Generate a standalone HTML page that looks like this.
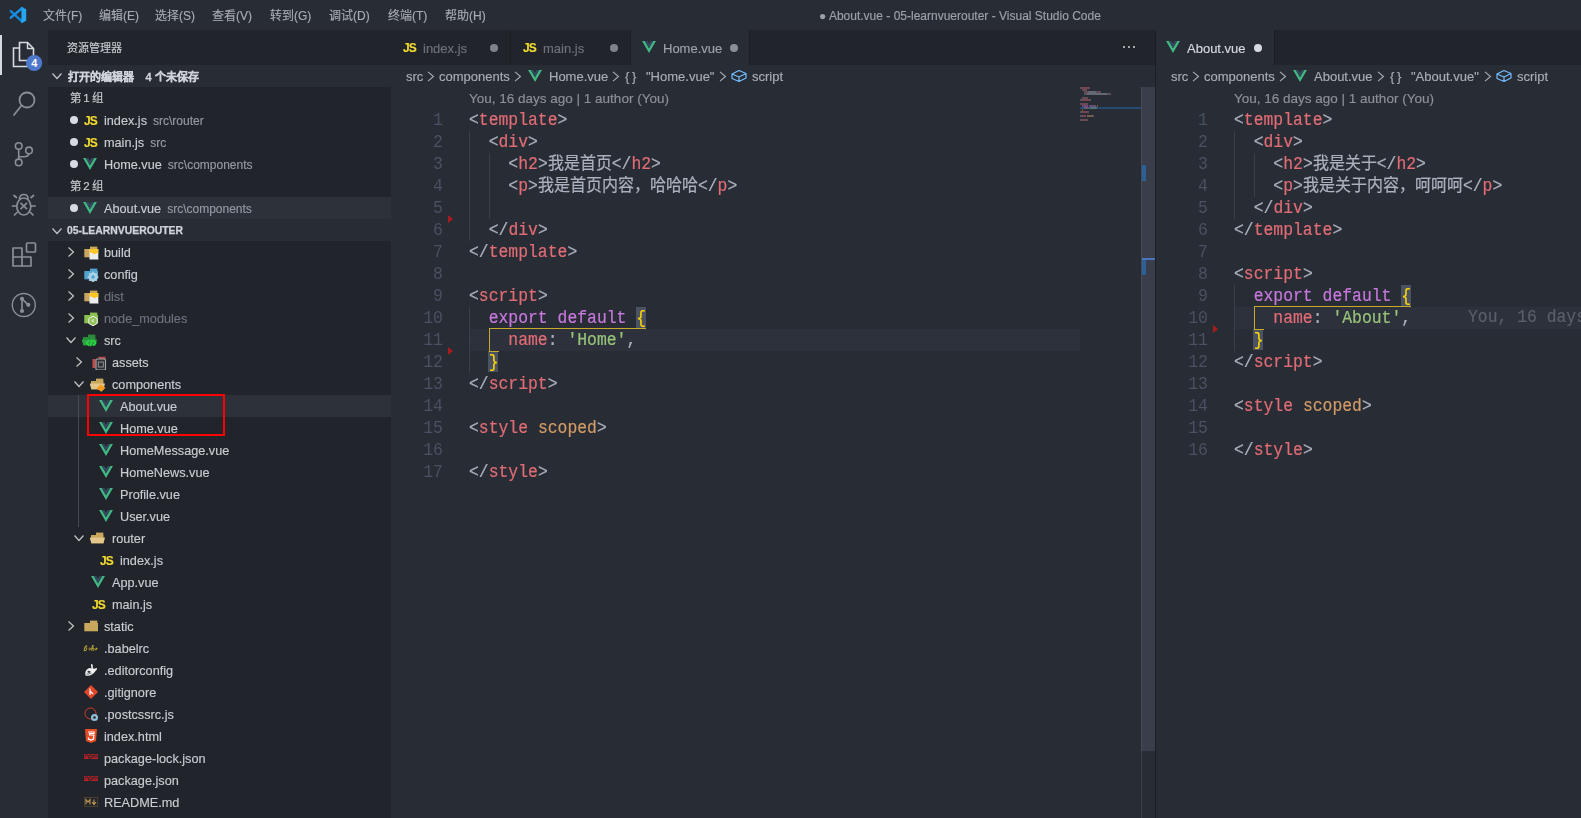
<!DOCTYPE html><html lang="zh-CN"><head><meta charset="utf-8"><style>
*{margin:0;padding:0;box-sizing:border-box}
html,body{width:1581px;height:818px;overflow:hidden;background:#282c34;font-family:"Liberation Sans",sans-serif;-webkit-font-smoothing:antialiased}
div,span,svg{position:absolute}
span{will-change:transform;-webkit-text-stroke:0.15px currentColor}
.menu{top:6px;white-space:nowrap;font-size:12px;color:#a7abb2}
.row{left:48px;width:343px;height:22px;line-height:22px;white-space:nowrap;font-size:13px;color:#c9ccd2}
.sel{background:#2c313a}
.lbl{top:0}
.desc{position:static;font-size:12px;color:#959aa2;margin-left:6px}
.dot{top:7px;width:8px;height:8px;border-radius:50%;background:#d7dae0}
.js{top:0;font-weight:bold;color:#f0d830;font-size:12px;letter-spacing:-0.9px}
.tab{top:30px;height:35px;border-right:1px solid #1b1e23;font-size:13px;line-height:35px;color:#8b9099;white-space:nowrap}
.bc{height:22px;line-height:22px;font-size:13px;color:#a9adb4;white-space:nowrap}
.bc span{position:static}
.ln{width:40px;height:22px;line-height:22px;transform:scaleY(1.1);text-align:right;font-family:"Liberation Mono",monospace;font-size:16.5px;color:#495162}
.cl{height:22px;line-height:22px;transform:scaleY(1.1);white-space:pre;font-family:"Liberation Mono",monospace;font-size:16.4px;color:#abb2bf;-webkit-text-stroke:0.2px currentColor}
.cl span{position:static;-webkit-text-stroke:0.2px currentColor}
.t{color:#e06c75}.p{color:#abb2bf}.k{color:#c678dd}.s{color:#98c379}.a{color:#d19a66}.y{color:#ffd700}
.cjk{font-size:16px}
.lens{font-size:13.5px;color:#8e9198;white-space:nowrap;height:22px;line-height:22px}
.ig{width:1px;background:#3b4048}
</style></head><body>
<div style="left:0;top:0;width:1581px;height:30px;background:#282c34"></div>
<svg style="left:0;top:0" width="32" height="30" viewBox="0 0 32 30"><path d="M10.8 11.2 L22.2 21.6" stroke="#1487d6" stroke-width="2.5" stroke-linecap="round"/><path d="M10.8 17.6 L22.2 8" stroke="#1a8ee0" stroke-width="2.5" stroke-linecap="round"/><path d="M21.4 7 L26.2 9.2 V20.8 L21.4 23.2 Z" fill="#24a6f2"/></svg>
<span class="menu" style="left:43px">文件(F)</span>
<span class="menu" style="left:99px">编辑(E)</span>
<span class="menu" style="left:155px">选择(S)</span>
<span class="menu" style="left:212px">查看(V)</span>
<span class="menu" style="left:270px">转到(G)</span>
<span class="menu" style="left:329px">调试(D)</span>
<span class="menu" style="left:388px">终端(T)</span>
<span class="menu" style="left:445px">帮助(H)</span>
<span class="menu" style="left:819px;top:9px;color:#9da1a9">● About.vue - 05-learnvuerouter - Visual Studio Code</span>
<div style="left:0;top:30px;width:48px;height:788px;background:#282c34"></div>
<div style="left:0;top:35px;width:2px;height:40px;background:#d7dae0"></div>
<svg style="left:0;top:30px" width="48" height="48" viewBox="0 0 48 48"><path d="M19.5 12.5 H27.5 L33.5 18.5 V30.5 H19.5 Z" fill="none" stroke="#d7dae0" stroke-width="1.6"/><path d="M27.5 12.5 V18.5 H33.5" fill="none" stroke="#d7dae0" stroke-width="1.4"/><path d="M19.5 18 H13.5 V36.5 H27.5 V30.5" fill="none" stroke="#d7dae0" stroke-width="1.6"/><circle cx="34.2" cy="33" r="8" fill="#4d78cc"/><text x="34.2" y="37" text-anchor="middle" font-family="Liberation Sans" font-weight="bold" font-size="11" fill="#fff">4</text></svg>
<svg style="left:0;top:78px" width="48" height="48" viewBox="0 0 48 48"><circle cx="27" cy="22" r="7.5" fill="none" stroke="#8a8e95" stroke-width="1.8"/><path d="M21.5 27.5 L13.5 37.5" stroke="#8a8e95" stroke-width="1.8"/></svg>
<svg style="left:0;top:128px" width="48" height="48" viewBox="0 0 48 48"><circle cx="18.7" cy="18" r="3.3" fill="none" stroke="#8a8e95" stroke-width="1.6"/><circle cx="18.7" cy="34.4" r="3.3" fill="none" stroke="#8a8e95" stroke-width="1.6"/><circle cx="29" cy="22.4" r="3.3" fill="none" stroke="#8a8e95" stroke-width="1.6"/><path d="M18.7 21.3 V31.1 M29 25.7 Q28 28.7 24 28.7 H18.7" fill="none" stroke="#8a8e95" stroke-width="1.6"/></svg>
<svg style="left:0;top:178px" width="48" height="48" viewBox="0 0 48 48"><ellipse cx="23.8" cy="28.5" rx="7" ry="8.5" fill="none" stroke="#8a8e95" stroke-width="1.7"/><path d="M19.5 21.5 Q19.5 16.5 23.8 16.5 Q28.1 16.5 28.1 21.5" fill="none" stroke="#8a8e95" stroke-width="1.7"/><path d="M17 20 L13.5 17 M30.6 20 L34 17 M16.8 28 H11.8 M30.8 28 H35.8 M17.5 34 L14 37.5 M30 34 L33.5 37.5 M20.5 24.8 L27 31.2 M27 24.8 L20.5 31.2" stroke="#8a8e95" stroke-width="1.7"/></svg>
<svg style="left:0;top:228px" width="48" height="48" viewBox="0 0 48 48"><path d="M13 20 H22 V38 H13 Z M13 29 H31 V38 H22" fill="none" stroke="#8a8e95" stroke-width="1.7" stroke-linejoin="round"/><rect x="26.5" y="15" width="9" height="9" rx="1" fill="none" stroke="#8a8e95" stroke-width="1.7"/></svg>
<svg style="left:0;top:278px" width="48" height="48" viewBox="0 0 48 48"><circle cx="23.8" cy="27" r="11.5" fill="none" stroke="#8a8e95" stroke-width="1.4"/><path d="M22 20.8 V33 M22 20.8 L28.3 26.8" stroke="#8a8e95" stroke-width="1.6"/><circle cx="22" cy="20.8" r="2.1" fill="#8a8e95"/><circle cx="28.3" cy="26.8" r="2.1" fill="#8a8e95"/><circle cx="22" cy="33" r="2.1" fill="#8a8e95"/></svg>
<div style="left:48px;top:30px;width:343px;height:788px;background:#21252b"></div>
<span style="left:67px;top:39px;font-size:11px;color:#c9ccd2;white-space:nowrap">资源管理器</span>
<div style="left:48px;top:65px;width:343px;height:22px;background:#282c34"></div>
<svg style="left:51px;top:71px" width="12" height="10" viewBox="0 0 12 10"><path d="M1.5 2.5 L6 7.5 L10.5 2.5" stroke="#c5c5c5" stroke-width="1.2" fill="none"/></svg>
<span style="left:68px;top:68px;font-size:11px;font-weight:bold;color:#d0d3d9;white-space:nowrap;-webkit-text-stroke:0.3px currentColor">打开的编辑器<span style="position:static;display:inline-block;width:11.5px"></span>4 个未保存</span>
<span style="left:70px;top:87px;line-height:22px;font-size:11.5px;color:#c9ccd2;white-space:nowrap">第&#8201;1&#8201;组</span>
<div class="dot" style="left:70px;top:116px"></div><span class="js" style="left:84px;top:110px;line-height:22px">JS</span><span style="left:104px;top:110px;line-height:22px;font-size:12.7px;white-space:nowrap;color:#c9ccd2">index.js<span class="desc">src\router</span></span>
<div class="dot" style="left:70px;top:138px"></div><span class="js" style="left:84px;top:132px;line-height:22px">JS</span><span style="left:104px;top:132px;line-height:22px;font-size:12.7px;white-space:nowrap;color:#c9ccd2">main.js<span class="desc">src</span></span>
<div class="dot" style="left:70px;top:160px"></div><svg style="left:83px;top:158px" width="14.0" height="12.0" viewBox="0 0 256 221"><path d="M0 0 L128 221 L256 0 H205 L128 133 L51 0 Z" fill="#41b883"/><path d="M51 0 L128 133 L205 0 H157 L128 51 L98 0 Z" fill="#35495e"/></svg><span style="left:104px;top:154px;line-height:22px;font-size:12.7px;white-space:nowrap;color:#c9ccd2">Home.vue<span class="desc">src\components</span></span>
<span style="left:70px;top:175px;line-height:22px;font-size:11.5px;color:#c9ccd2;white-space:nowrap">第&#8201;2&#8201;组</span>
<div class="row sel" style="top:197px"></div>
<div class="dot" style="left:70px;top:204px"></div><svg style="left:83px;top:202px" width="14.0" height="12.0" viewBox="0 0 256 221"><path d="M0 0 L128 221 L256 0 H205 L128 133 L51 0 Z" fill="#41b883"/><path d="M51 0 L128 133 L205 0 H157 L128 51 L98 0 Z" fill="#35495e"/></svg><span style="left:104px;top:198px;line-height:22px;font-size:12.7px;white-space:nowrap;color:#c9ccd2">About.vue<span class="desc">src\components</span></span>
<div style="left:48px;top:219px;width:343px;height:22px;background:#282c34"></div>
<svg style="left:51px;top:226px" width="12" height="10" viewBox="0 0 12 10"><path d="M1.5 2.5 L6 7.5 L10.5 2.5" stroke="#c5c5c5" stroke-width="1.2" fill="none"/></svg>
<span style="left:67px;top:225px;font-size:10.4px;font-weight:bold;color:#d0d3d9;white-space:nowrap;-webkit-text-stroke:0.25px currentColor">05-LEARNVUEROUTER</span>
<svg style="left:66px;top:246px" width="10" height="12" viewBox="0 0 10 12"><path d="M2.5 1.5 L7.5 6 L2.5 10.5" stroke="#c5c5c5" stroke-width="1.2" fill="none"/></svg><svg style="left:84px;top:244px" width="18" height="16" viewBox="0 0 18 16"><path d="M6 2.6 H13.3 V5 H6 Z" fill="#c9a75c"/><path d="M0.3 5 H14 V13.3 H0.3 Z" fill="#c9a75c"/><path d="M5.5 5 H14.3 V16 L13.5 15.5 H5.5 Z" fill="#ecedef"/><path d="M5.5 5 H14.3 V9.5 Q12.5 8 10.5 10.5 Q8 8 5.5 8.5 Z" fill="#fcc623"/></svg><span style="left:104px;top:242px;line-height:22px;font-size:12.7px;white-space:nowrap;color:#c9ccd2">build</span>
<svg style="left:66px;top:268px" width="10" height="12" viewBox="0 0 10 12"><path d="M2.5 1.5 L7.5 6 L2.5 10.5" stroke="#c5c5c5" stroke-width="1.2" fill="none"/></svg><svg style="left:84px;top:266px" width="18" height="16" viewBox="0 0 18 16"><path d="M6 2.6 H13.3 V5 H6 Z" fill="#4fa3d1"/><path d="M0.3 5 H14 V13.3 H0.3 Z" fill="#4fa3d1"/><circle cx="9" cy="11" r="4.6" fill="#a9d0e4"/><path d="M9 5.6 V16.4 M3.6 11 H14.4 M5.2 7.2 L12.8 14.8 M12.8 7.2 L5.2 14.8" stroke="#a9d0e4" stroke-width="1.6"/><circle cx="9" cy="11" r="1.8" fill="#4fa3d1"/></svg><span style="left:104px;top:264px;line-height:22px;font-size:12.7px;white-space:nowrap;color:#c9ccd2">config</span>
<svg style="left:66px;top:290px" width="10" height="12" viewBox="0 0 10 12"><path d="M2.5 1.5 L7.5 6 L2.5 10.5" stroke="#c5c5c5" stroke-width="1.2" fill="none"/></svg><svg style="left:84px;top:288px" width="18" height="16" viewBox="0 0 18 16"><path d="M6 2.6 H13.3 V5 H6 Z" fill="#c9a75c"/><path d="M0.3 5 H14 V13.3 H0.3 Z" fill="#c9a75c"/><path d="M5.5 5 H14.3 V16 L13.5 15.5 H5.5 Z" fill="#ecedef"/><path d="M5.5 5 H14.3 V9.5 Q12.5 8 10.5 10.5 Q8 8 5.5 8.5 Z" fill="#fcc623"/></svg><span style="left:104px;top:286px;line-height:22px;font-size:12.7px;white-space:nowrap;color:#6b717c">dist</span>
<svg style="left:66px;top:312px" width="10" height="12" viewBox="0 0 10 12"><path d="M2.5 1.5 L7.5 6 L2.5 10.5" stroke="#c5c5c5" stroke-width="1.2" fill="none"/></svg><svg style="left:84px;top:310px" width="18" height="16" viewBox="0 0 18 16"><path d="M6 2.6 H13.3 V5 H6 Z" fill="#8cc152"/><path d="M0.3 5 H14 V13.3 H0.3 Z" fill="#8cc152"/><path d="M9 6.2 L13.2 8.6 V13.4 L9 15.8 L4.8 13.4 V8.6 Z" fill="#8cc152" stroke="#f2f2f2" stroke-width="1"/><path d="M8 9.5 V12.5 M10 9.5 Q8.5 9 8.8 11 Q10.5 11 10 12.5" stroke="#f2f2f2" stroke-width="0.7" fill="none"/></svg><span style="left:104px;top:308px;line-height:22px;font-size:12.7px;white-space:nowrap;color:#6b717c">node_modules</span>
<svg style="left:65px;top:335px" width="12" height="10" viewBox="0 0 12 10"><path d="M1.5 2.5 L6 7.5 L10.5 2.5" stroke="#c5c5c5" stroke-width="1.2" fill="none"/></svg><svg style="left:82px;top:332px" width="18" height="16" viewBox="0 0 18 16"><path d="M6 2.6 H13.3 V5 H6 Z" fill="#2b8a3a"/><path d="M1 5 H13.5 V13.3 H1 Z" fill="#2b8a3a"/><path d="M-0.5 7.5 H15 L13.5 13.3 H1.5 Z" fill="#2fa044"/><path d="M7.2 8.2 L4.4 11 L7.2 13.8 M11 8.2 L13.8 11 L11 13.8 M9.8 7.6 L8.4 14.4" stroke="#20e03f" stroke-width="1.4" fill="none"/></svg><span style="left:104px;top:330px;line-height:22px;font-size:12.7px;white-space:nowrap;color:#c9ccd2">src</span>
<svg style="left:74px;top:356px" width="10" height="12" viewBox="0 0 10 12"><path d="M2.5 1.5 L7.5 6 L2.5 10.5" stroke="#c5c5c5" stroke-width="1.2" fill="none"/></svg><svg style="left:92px;top:354px" width="18" height="16" viewBox="0 0 18 16"><path d="M0.5 5 H3.5 V14 H0.5 Z" fill="#c44b4b"/><path d="M6.5 2.8 H13.5 V4.8 H6.5 Z" fill="#c44b4b"/><rect x="4" y="5" width="9.5" height="11" rx="1" fill="#2c2f35" stroke="#a8a8a8" stroke-width="1.1"/><rect x="6.3" y="8" width="5" height="5" fill="none" stroke="#9a9a9a" stroke-width="0.9"/></svg><span style="left:112px;top:352px;line-height:22px;font-size:12.7px;white-space:nowrap;color:#c9ccd2">assets</span>
<svg style="left:73px;top:379px" width="12" height="10" viewBox="0 0 12 10"><path d="M1.5 2.5 L6 7.5 L10.5 2.5" stroke="#c5c5c5" stroke-width="1.2" fill="none"/></svg><svg style="left:90px;top:376px" width="18" height="16" viewBox="0 0 18 16"><path d="M6 2.6 H13.3 V5 H6 Z" fill="#c9a75c"/><path d="M1 5 H13.5 V13.3 H1 Z" fill="#c9a75c"/><path d="M-0.5 7.5 H15 L13.5 13.3 H1.5 Z" fill="#e1c78a"/><path d="M10.5 8.5 L15.5 11.8 L11.5 15.8 L6.5 12.5 Z" fill="#f39c1f"/></svg><span style="left:112px;top:374px;line-height:22px;font-size:12.7px;white-space:nowrap;color:#c9ccd2">components</span>
<div class="row sel" style="top:395px"></div>
<svg style="left:99px;top:400px" width="14.0" height="12.0" viewBox="0 0 256 221"><path d="M0 0 L128 221 L256 0 H205 L128 133 L51 0 Z" fill="#41b883"/><path d="M51 0 L128 133 L205 0 H157 L128 51 L98 0 Z" fill="#35495e"/></svg><span style="left:120px;top:396px;line-height:22px;font-size:12.7px;white-space:nowrap;color:#c9ccd2">About.vue</span>
<svg style="left:99px;top:422px" width="14.0" height="12.0" viewBox="0 0 256 221"><path d="M0 0 L128 221 L256 0 H205 L128 133 L51 0 Z" fill="#41b883"/><path d="M51 0 L128 133 L205 0 H157 L128 51 L98 0 Z" fill="#35495e"/></svg><span style="left:120px;top:418px;line-height:22px;font-size:12.7px;white-space:nowrap;color:#c9ccd2">Home.vue</span>
<svg style="left:99px;top:444px" width="14.0" height="12.0" viewBox="0 0 256 221"><path d="M0 0 L128 221 L256 0 H205 L128 133 L51 0 Z" fill="#41b883"/><path d="M51 0 L128 133 L205 0 H157 L128 51 L98 0 Z" fill="#35495e"/></svg><span style="left:120px;top:440px;line-height:22px;font-size:12.7px;white-space:nowrap;color:#c9ccd2">HomeMessage.vue</span>
<svg style="left:99px;top:466px" width="14.0" height="12.0" viewBox="0 0 256 221"><path d="M0 0 L128 221 L256 0 H205 L128 133 L51 0 Z" fill="#41b883"/><path d="M51 0 L128 133 L205 0 H157 L128 51 L98 0 Z" fill="#35495e"/></svg><span style="left:120px;top:462px;line-height:22px;font-size:12.7px;white-space:nowrap;color:#c9ccd2">HomeNews.vue</span>
<svg style="left:99px;top:488px" width="14.0" height="12.0" viewBox="0 0 256 221"><path d="M0 0 L128 221 L256 0 H205 L128 133 L51 0 Z" fill="#41b883"/><path d="M51 0 L128 133 L205 0 H157 L128 51 L98 0 Z" fill="#35495e"/></svg><span style="left:120px;top:484px;line-height:22px;font-size:12.7px;white-space:nowrap;color:#c9ccd2">Profile.vue</span>
<svg style="left:99px;top:510px" width="14.0" height="12.0" viewBox="0 0 256 221"><path d="M0 0 L128 221 L256 0 H205 L128 133 L51 0 Z" fill="#41b883"/><path d="M51 0 L128 133 L205 0 H157 L128 51 L98 0 Z" fill="#35495e"/></svg><span style="left:120px;top:506px;line-height:22px;font-size:12.7px;white-space:nowrap;color:#c9ccd2">User.vue</span>
<div style="left:78px;top:395px;width:1px;height:132px;background:#454a52"></div>
<svg style="left:73px;top:533px" width="12" height="10" viewBox="0 0 12 10"><path d="M1.5 2.5 L6 7.5 L10.5 2.5" stroke="#c5c5c5" stroke-width="1.2" fill="none"/></svg><svg style="left:90px;top:530px" width="18" height="16" viewBox="0 0 18 16"><path d="M6 2.6 H13.3 V5 H6 Z" fill="#c9a75c"/><path d="M1 5 H13.5 V13.3 H1 Z" fill="#c9a75c"/><path d="M-0.5 7.5 H15 L13.5 13.3 H1.5 Z" fill="#e1c78a"/></svg><span style="left:112px;top:528px;line-height:22px;font-size:12.7px;white-space:nowrap;color:#c9ccd2">router</span>
<span class="js" style="left:100px;top:550px;line-height:22px">JS</span><span style="left:120px;top:550px;line-height:22px;font-size:12.7px;white-space:nowrap;color:#c9ccd2">index.js</span>
<svg style="left:91px;top:576px" width="14.0" height="12.0" viewBox="0 0 256 221"><path d="M0 0 L128 221 L256 0 H205 L128 133 L51 0 Z" fill="#41b883"/><path d="M51 0 L128 133 L205 0 H157 L128 51 L98 0 Z" fill="#35495e"/></svg><span style="left:112px;top:572px;line-height:22px;font-size:12.7px;white-space:nowrap;color:#c9ccd2">App.vue</span>
<span class="js" style="left:92px;top:594px;line-height:22px">JS</span><span style="left:112px;top:594px;line-height:22px;font-size:12.7px;white-space:nowrap;color:#c9ccd2">main.js</span>
<svg style="left:66px;top:620px" width="10" height="12" viewBox="0 0 10 12"><path d="M2.5 1.5 L7.5 6 L2.5 10.5" stroke="#c5c5c5" stroke-width="1.2" fill="none"/></svg><svg style="left:84px;top:618px" width="18" height="16" viewBox="0 0 18 16"><path d="M6 2.6 H13.3 V5 H6 Z" fill="#c9a75c"/><path d="M0.3 5 H14 V13.3 H0.3 Z" fill="#c9a75c"/></svg><span style="left:104px;top:616px;line-height:22px;font-size:12.7px;white-space:nowrap;color:#c9ccd2">static</span>
<span style="left:104px;top:638px;line-height:22px;font-size:12.7px;white-space:nowrap;color:#c9ccd2">.babelrc</span>
<span style="left:104px;top:660px;line-height:22px;font-size:12.7px;white-space:nowrap;color:#c9ccd2">.editorconfig</span>
<span style="left:104px;top:682px;line-height:22px;font-size:12.7px;white-space:nowrap;color:#c9ccd2">.gitignore</span>
<span style="left:104px;top:704px;line-height:22px;font-size:12.7px;white-space:nowrap;color:#c9ccd2">.postcssrc.js</span>
<span style="left:104px;top:726px;line-height:22px;font-size:12.7px;white-space:nowrap;color:#c9ccd2">index.html</span>
<span style="left:104px;top:748px;line-height:22px;font-size:12.7px;white-space:nowrap;color:#c9ccd2">package-lock.json</span>
<span style="left:104px;top:770px;line-height:22px;font-size:12.7px;white-space:nowrap;color:#c9ccd2">package.json</span>
<span style="left:104px;top:792px;line-height:22px;font-size:12.7px;white-space:nowrap;color:#c9ccd2">README.md</span>
<svg style="left:83px;top:644px" width="15" height="8" viewBox="0 0 15 8"><path d="M1 6.5 Q2 1 3.5 1.5 Q4.5 2.5 2.5 4 Q5 4.5 3 6.5 Q2 7 1 6.5 M5.5 5 Q6.5 3.5 7.5 4.5 Q7 6.5 6 6 M8.5 6.5 Q9 2 10 1 Q10 4 9.5 5 Q11 3.5 11.5 5 Q11 7 9.5 6.3 M12.5 5.5 Q13 3.5 14 4 Q14.5 5.5 12.5 6" stroke="#cbb237" stroke-width="0.9" fill="none"/></svg>
<svg style="left:84px;top:663px" width="14" height="14" viewBox="0 0 14 14"><path d="M1.5 12.5 Q0.5 8 3.5 6 Q5.5 4.5 7.5 5.5 L7 2.5 Q6.5 0.8 8 1 Q9 1.5 8.8 4 Q8.5 5.5 10 5.8 L13 5 Q13.5 6.5 11.5 8 Q10 10 8 11.5 Q5 13.5 1.5 12.5 Z" fill="#f0f0f0"/><ellipse cx="5" cy="8.8" rx="1.6" ry="1.1" fill="#3a3d44"/><path d="M2.5 11 Q5 11.5 7.5 10" stroke="#3a3d44" stroke-width="0.7" fill="none"/></svg>
<svg style="left:84px;top:685px" width="14" height="14" viewBox="0 0 14 14"><path d="M7 0 L14 7 L7 14 L0 7 Z" fill="#e0472b"/><path d="M6 3.5 L6 10 M6 6 L9 9" stroke="#fff" stroke-width="1.1"/></svg>
<svg style="left:84px;top:707px" width="15" height="15" viewBox="0 0 15 15"><circle cx="6.5" cy="6.5" r="5.5" fill="none" stroke="#d33c2c" stroke-width="1"/><circle cx="10.5" cy="10.5" r="3.5" fill="#8fc1dc"/><circle cx="10.5" cy="10.5" r="1.3" fill="#21252b"/></svg>
<svg style="left:85px;top:729px" width="12" height="14" viewBox="0 0 12 14"><path d="M0 0 H12 L11 12 L6 14 L1 12 Z" fill="#e44d26"/><path d="M3 3 H9 V4.5 H4.5 V6 H8.8 L8.5 10 L6 11 L3.5 10 V8.5" fill="none" stroke="#fff" stroke-width="1.2"/></svg>
<svg style="left:84px;top:754px" width="14" height="7" viewBox="0 0 14 7"><rect x="0" y="0" width="14" height="5" fill="#c12127"/><path d="M1 1 V4 M1 1 H4 V4 M5 1 V6 M5 1 H8 V4 H5 M9 1 V4 M9 1 H13 V4 M11 1 V4" stroke="#21252b" stroke-width="0.8" fill="none"/></svg>
<svg style="left:84px;top:776px" width="14" height="7" viewBox="0 0 14 7"><rect x="0" y="0" width="14" height="5" fill="#c12127"/><path d="M1 1 V4 M1 1 H4 V4 M5 1 V6 M5 1 H8 V4 H5 M9 1 V4 M9 1 H13 V4 M11 1 V4" stroke="#21252b" stroke-width="0.8" fill="none"/></svg>
<svg style="left:84px;top:797px" width="14" height="10" viewBox="0 0 14 10"><rect x="0.5" y="0.5" width="13" height="9" fill="none" stroke="#4a3f2f"/><path d="M2 7.5 V2.5 L4 5 L6 2.5 V7.5 M10 2.5 V7 M8 5 L10 7.5 L12 5" stroke="#c29a5a" stroke-width="1.1" fill="none"/></svg>
<div style="left:87px;top:394px;width:138px;height:42px;border:2px solid #f00"></div>
<div style="left:391px;top:30px;width:764px;height:35px;background:#21252b"></div>
<div class="tab" style="left:391px;width:120px"></div>
<span class="js" style="left:403px;top:31px;line-height:35px">JS</span>
<span style="left:423px;top:31px;line-height:35px;font-size:13px;color:#6c717a;white-space:nowrap">index.js</span>
<div class="dot" style="left:490px;top:44px;background:#7e838b"></div>
<div class="tab" style="left:511px;width:120px"></div>
<span class="js" style="left:523px;top:31px;line-height:35px">JS</span>
<span style="left:543px;top:31px;line-height:35px;font-size:13px;color:#6c717a;white-space:nowrap">main.js</span>
<div class="dot" style="left:610px;top:44px;background:#7e838b"></div>
<div class="tab" style="left:631px;width:119px;background:#282c34"></div>
<svg style="left:642px;top:41px" width="14.0" height="12.0" viewBox="0 0 256 221"><path d="M0 0 L128 221 L256 0 H205 L128 133 L51 0 Z" fill="#41b883"/><path d="M51 0 L128 133 L205 0 H157 L128 51 L98 0 Z" fill="#35495e"/></svg>
<span style="left:663px;top:31px;line-height:35px;font-size:13px;color:#9ea2a9">Home.vue</span>
<div class="dot" style="left:730px;top:44px;background:#8a8e95"></div>
<div style="left:1123px;top:46px;width:2.2px;height:2.2px;background:#d4d4d4;border-radius:50%"></div>
<div style="left:1128px;top:46px;width:2.2px;height:2.2px;background:#d4d4d4;border-radius:50%"></div>
<div style="left:1133px;top:46px;width:2.2px;height:2.2px;background:#d4d4d4;border-radius:50%"></div>
<span style="left:406px;top:66px;line-height:22px;font-size:13px;color:#a9adb4;white-space:nowrap">src</span>
<svg style="left:427px;top:71px" width="8" height="11" viewBox="0 0 8 11"><path d="M1 0.8 L6.5 5.5 L1 10.2" stroke="#a9adb4" stroke-width="1.1" fill="none"/></svg>
<span style="left:439px;top:66px;line-height:22px;font-size:13px;color:#a9adb4;white-space:nowrap">components</span>
<svg style="left:514px;top:71px" width="8" height="11" viewBox="0 0 8 11"><path d="M1 0.8 L6.5 5.5 L1 10.2" stroke="#a9adb4" stroke-width="1.1" fill="none"/></svg>
<svg style="left:528px;top:70px" width="14.0" height="12.0" viewBox="0 0 256 221"><path d="M0 0 L128 221 L256 0 H205 L128 133 L51 0 Z" fill="#41b883"/><path d="M51 0 L128 133 L205 0 H157 L128 51 L98 0 Z" fill="#35495e"/></svg>
<span style="left:549px;top:66px;line-height:22px;font-size:13px;color:#a9adb4;white-space:nowrap">Home.vue</span>
<svg style="left:612px;top:71px" width="8" height="11" viewBox="0 0 8 11"><path d="M1 0.8 L6.5 5.5 L1 10.2" stroke="#a9adb4" stroke-width="1.1" fill="none"/></svg>
<span style="left:625px;top:66px;line-height:22px;font-size:13px;color:#a9adb4;white-space:nowrap">{&#8201;}</span>
<span style="left:646px;top:66px;line-height:22px;font-size:13px;color:#a9adb4;white-space:nowrap">"Home.vue"</span>
<svg style="left:719px;top:71px" width="8" height="11" viewBox="0 0 8 11"><path d="M1 0.8 L6.5 5.5 L1 10.2" stroke="#a9adb4" stroke-width="1.1" fill="none"/></svg>
<svg style="left:731px;top:69px" width="16" height="14" viewBox="0 0 16 14"><path d="M1 5 L8 1.5 L15 4.5 V9 L8 12.5 L1 9.5 Z M1 5 L8 8 L15 4.5 M8 8 V12.5" stroke="#75beff" stroke-width="1.2" fill="none" stroke-linejoin="round"/></svg>
<span style="left:752px;top:66px;line-height:22px;font-size:13px;color:#a9adb4;white-space:nowrap">script</span>
<span class="lens" style="left:469px;top:88px">You, 16 days ago | 1 author (You)</span>
<div style="left:469px;top:329px;width:611px;height:22px;background:#2c313c"></div>
<div style="left:636px;top:307px;width:10px;height:21px;background:#4b5262"></div>
<div style="left:488px;top:351px;width:10px;height:21px;background:#4b5262"></div>
<div class="ig" style="left:469px;top:131px;height:110px"></div>
<div class="ig" style="left:489px;top:153px;height:66px"></div>
<div class="ig" style="left:469px;top:307px;height:66px"></div>
<div class="ln" style="left:403px;top:110px">1</div>
<div class="cl" style="left:469px;top:110px"><span class="p">&lt;</span><span class="t">template</span><span class="p">&gt;</span></div>
<div class="ln" style="left:403px;top:132px">2</div>
<div class="cl" style="left:469px;top:132px">  <span class="p">&lt;</span><span class="t">div</span><span class="p">&gt;</span></div>
<div class="ln" style="left:403px;top:154px">3</div>
<div class="cl" style="left:469px;top:154px">    <span class="p">&lt;</span><span class="t">h2</span><span class="p">&gt;</span><span class="cjk">我是首页</span><span class="p">&lt;/</span><span class="t">h2</span><span class="p">&gt;</span></div>
<div class="ln" style="left:403px;top:176px">4</div>
<div class="cl" style="left:469px;top:176px">    <span class="p">&lt;</span><span class="t">p</span><span class="p">&gt;</span><span class="cjk">我是首页内容，哈哈哈</span><span class="p">&lt;/</span><span class="t">p</span><span class="p">&gt;</span></div>
<div class="ln" style="left:403px;top:198px">5</div>
<div class="cl" style="left:469px;top:198px"></div>
<div class="ln" style="left:403px;top:220px">6</div>
<div class="cl" style="left:469px;top:220px">  <span class="p">&lt;/</span><span class="t">div</span><span class="p">&gt;</span></div>
<div class="ln" style="left:403px;top:242px">7</div>
<div class="cl" style="left:469px;top:242px"><span class="p">&lt;/</span><span class="t">template</span><span class="p">&gt;</span></div>
<div class="ln" style="left:403px;top:264px">8</div>
<div class="cl" style="left:469px;top:264px"></div>
<div class="ln" style="left:403px;top:286px">9</div>
<div class="cl" style="left:469px;top:286px"><span class="p">&lt;</span><span class="t">script</span><span class="p">&gt;</span></div>
<div class="ln" style="left:403px;top:308px">10</div>
<div class="cl" style="left:469px;top:308px">  <span class="k">export</span> <span class="k">default</span> <span class="y">{</span></div>
<div class="ln" style="left:403px;top:330px">11</div>
<div class="cl" style="left:469px;top:330px">    <span class="t">name</span>: <span class="s">'Home'</span>,</div>
<div class="ln" style="left:403px;top:352px">12</div>
<div class="cl" style="left:469px;top:352px">  <span class="y">}</span></div>
<div class="ln" style="left:403px;top:374px">13</div>
<div class="cl" style="left:469px;top:374px"><span class="p">&lt;/</span><span class="t">script</span><span class="p">&gt;</span></div>
<div class="ln" style="left:403px;top:396px">14</div>
<div class="cl" style="left:469px;top:396px"></div>
<div class="ln" style="left:403px;top:418px">15</div>
<div class="cl" style="left:469px;top:418px"><span class="p">&lt;</span><span class="t">style</span> <span class="a">scoped</span><span class="p">&gt;</span></div>
<div class="ln" style="left:403px;top:440px">16</div>
<div class="cl" style="left:469px;top:440px"></div>
<div class="ln" style="left:403px;top:462px">17</div>
<div class="cl" style="left:469px;top:462px"><span class="p">&lt;/</span><span class="t">style</span><span class="p">&gt;</span></div>
<svg style="left:448px;top:215px" width="5" height="8" viewBox="0 0 5 8"><path d="M0 0 L5 4 L0 8 Z" fill="#a81b1f"/></svg>
<svg style="left:448px;top:347px" width="5" height="8" viewBox="0 0 5 8"><path d="M0 0 L5 4 L0 8 Z" fill="#a81b1f"/></svg>
<div style="left:489px;top:328px;width:157px;height:1px;background:#c9a92a"></div>
<div style="left:489px;top:328px;width:1px;height:23px;background:#c9a92a"></div>
<div style="left:489px;top:351px;width:10px;height:1px;background:#c9a92a"></div>
<div style="left:1080px;top:107px;width:61px;height:2px;background:#264a70"></div>
<div style="left:1080px;top:87px;width:1px;height:2px;background:rgba(171,178,191,0.3)"></div>
<div style="left:1081px;top:87px;width:8px;height:2px;background:rgba(224,108,117,0.42)"></div>
<div style="left:1089px;top:87px;width:1px;height:2px;background:rgba(171,178,191,0.3)"></div>
<div style="left:1082px;top:89px;width:1px;height:2px;background:rgba(171,178,191,0.3)"></div>
<div style="left:1083px;top:89px;width:3px;height:2px;background:rgba(224,108,117,0.42)"></div>
<div style="left:1086px;top:89px;width:1px;height:2px;background:rgba(171,178,191,0.3)"></div>
<div style="left:1084px;top:91px;width:1px;height:2px;background:rgba(171,178,191,0.3)"></div>
<div style="left:1085px;top:91px;width:2px;height:2px;background:rgba(224,108,117,0.42)"></div>
<div style="left:1087px;top:91px;width:1px;height:2px;background:rgba(171,178,191,0.3)"></div>
<div style="left:1088px;top:91px;width:8px;height:2px;background:rgba(171,178,191,0.45)"></div>
<div style="left:1096px;top:91px;width:2px;height:2px;background:rgba(171,178,191,0.3)"></div>
<div style="left:1098px;top:91px;width:2px;height:2px;background:rgba(224,108,117,0.42)"></div>
<div style="left:1100px;top:91px;width:1px;height:2px;background:rgba(171,178,191,0.3)"></div>
<div style="left:1084px;top:93px;width:1px;height:2px;background:rgba(171,178,191,0.3)"></div>
<div style="left:1085px;top:93px;width:1px;height:2px;background:rgba(224,108,117,0.42)"></div>
<div style="left:1086px;top:93px;width:1px;height:2px;background:rgba(171,178,191,0.3)"></div>
<div style="left:1087px;top:93px;width:20px;height:2px;background:rgba(171,178,191,0.45)"></div>
<div style="left:1107px;top:93px;width:2px;height:2px;background:rgba(171,178,191,0.3)"></div>
<div style="left:1109px;top:93px;width:1px;height:2px;background:rgba(224,108,117,0.42)"></div>
<div style="left:1110px;top:93px;width:1px;height:2px;background:rgba(171,178,191,0.3)"></div>
<div style="left:1082px;top:97px;width:2px;height:2px;background:rgba(171,178,191,0.3)"></div>
<div style="left:1084px;top:97px;width:3px;height:2px;background:rgba(224,108,117,0.42)"></div>
<div style="left:1087px;top:97px;width:1px;height:2px;background:rgba(171,178,191,0.3)"></div>
<div style="left:1080px;top:99px;width:2px;height:2px;background:rgba(171,178,191,0.3)"></div>
<div style="left:1082px;top:99px;width:8px;height:2px;background:rgba(224,108,117,0.42)"></div>
<div style="left:1090px;top:99px;width:1px;height:2px;background:rgba(171,178,191,0.3)"></div>
<div style="left:1080px;top:103px;width:1px;height:2px;background:rgba(171,178,191,0.3)"></div>
<div style="left:1081px;top:103px;width:6px;height:2px;background:rgba(224,108,117,0.42)"></div>
<div style="left:1087px;top:103px;width:1px;height:2px;background:rgba(171,178,191,0.3)"></div>
<div style="left:1082px;top:105px;width:6px;height:2px;background:rgba(198,120,221,0.42)"></div>
<div style="left:1089px;top:105px;width:7px;height:2px;background:rgba(198,120,221,0.42)"></div>
<div style="left:1097px;top:105px;width:1px;height:2px;background:rgba(255,215,0,0.35)"></div>
<div style="left:1084px;top:107px;width:4px;height:2px;background:rgba(224,108,117,0.42)"></div>
<div style="left:1088px;top:107px;width:1px;height:2px;background:rgba(171,178,191,0.3)"></div>
<div style="left:1090px;top:107px;width:6px;height:2px;background:rgba(152,195,121,0.38)"></div>
<div style="left:1096px;top:107px;width:1px;height:2px;background:rgba(171,178,191,0.3)"></div>
<div style="left:1082px;top:109px;width:1px;height:2px;background:rgba(255,215,0,0.35)"></div>
<div style="left:1080px;top:111px;width:2px;height:2px;background:rgba(171,178,191,0.3)"></div>
<div style="left:1082px;top:111px;width:6px;height:2px;background:rgba(224,108,117,0.42)"></div>
<div style="left:1088px;top:111px;width:1px;height:2px;background:rgba(171,178,191,0.3)"></div>
<div style="left:1080px;top:115px;width:1px;height:2px;background:rgba(171,178,191,0.3)"></div>
<div style="left:1081px;top:115px;width:5px;height:2px;background:rgba(224,108,117,0.42)"></div>
<div style="left:1087px;top:115px;width:6px;height:2px;background:rgba(209,154,102,0.45)"></div>
<div style="left:1093px;top:115px;width:1px;height:2px;background:rgba(171,178,191,0.3)"></div>
<div style="left:1080px;top:119px;width:2px;height:2px;background:rgba(171,178,191,0.3)"></div>
<div style="left:1082px;top:119px;width:5px;height:2px;background:rgba(224,108,117,0.42)"></div>
<div style="left:1087px;top:119px;width:1px;height:2px;background:rgba(171,178,191,0.3)"></div>
<div style="left:1141px;top:87px;width:14px;height:731px;border-left:1px solid #3a3f48"></div>
<div style="left:1141px;top:87px;width:14px;height:664px;background:#3a3e4a;border-left:1px solid #474b56"></div>
<div style="left:1142px;top:165px;width:4px;height:16px;background:#2a6198"></div>
<div style="left:1142px;top:260px;width:4px;height:15px;background:#2a6198"></div>
<div style="left:1142px;top:258px;width:13px;height:2px;background:#4a74bc"></div>
<div style="left:1156px;top:30px;width:425px;height:35px;background:#21252b"></div>
<div class="tab" style="left:1156px;width:119px;background:#282c34"></div>
<svg style="left:1166px;top:41px" width="14.0" height="12.0" viewBox="0 0 256 221"><path d="M0 0 L128 221 L256 0 H205 L128 133 L51 0 Z" fill="#41b883"/><path d="M51 0 L128 133 L205 0 H157 L128 51 L98 0 Z" fill="#35495e"/></svg>
<span style="left:1187px;top:31px;line-height:35px;font-size:13px;color:#d7dae0">About.vue</span>
<div class="dot" style="left:1254px;top:44px;background:#d7dae0"></div>
<span style="left:1171px;top:66px;line-height:22px;font-size:13px;color:#a9adb4;white-space:nowrap">src</span>
<svg style="left:1192px;top:71px" width="8" height="11" viewBox="0 0 8 11"><path d="M1 0.8 L6.5 5.5 L1 10.2" stroke="#a9adb4" stroke-width="1.1" fill="none"/></svg>
<span style="left:1204px;top:66px;line-height:22px;font-size:13px;color:#a9adb4;white-space:nowrap">components</span>
<svg style="left:1279px;top:71px" width="8" height="11" viewBox="0 0 8 11"><path d="M1 0.8 L6.5 5.5 L1 10.2" stroke="#a9adb4" stroke-width="1.1" fill="none"/></svg>
<svg style="left:1293px;top:70px" width="14.0" height="12.0" viewBox="0 0 256 221"><path d="M0 0 L128 221 L256 0 H205 L128 133 L51 0 Z" fill="#41b883"/><path d="M51 0 L128 133 L205 0 H157 L128 51 L98 0 Z" fill="#35495e"/></svg>
<span style="left:1314px;top:66px;line-height:22px;font-size:13px;color:#a9adb4;white-space:nowrap">About.vue</span>
<svg style="left:1377px;top:71px" width="8" height="11" viewBox="0 0 8 11"><path d="M1 0.8 L6.5 5.5 L1 10.2" stroke="#a9adb4" stroke-width="1.1" fill="none"/></svg>
<span style="left:1390px;top:66px;line-height:22px;font-size:13px;color:#a9adb4;white-space:nowrap">{&#8201;}</span>
<span style="left:1411px;top:66px;line-height:22px;font-size:13px;color:#a9adb4;white-space:nowrap">"About.vue"</span>
<svg style="left:1484px;top:71px" width="8" height="11" viewBox="0 0 8 11"><path d="M1 0.8 L6.5 5.5 L1 10.2" stroke="#a9adb4" stroke-width="1.1" fill="none"/></svg>
<svg style="left:1496px;top:69px" width="16" height="14" viewBox="0 0 16 14"><path d="M1 5 L8 1.5 L15 4.5 V9 L8 12.5 L1 9.5 Z M1 5 L8 8 L15 4.5 M8 8 V12.5" stroke="#75beff" stroke-width="1.2" fill="none" stroke-linejoin="round"/></svg>
<span style="left:1517px;top:66px;line-height:22px;font-size:13px;color:#a9adb4;white-space:nowrap">script</span>
<span class="lens" style="left:1234px;top:88px">You, 16 days ago | 1 author (You)</span>
<div style="left:1234px;top:307px;width:425px;height:22px;background:#2c313c"></div>
<div style="left:1401px;top:285px;width:10px;height:21px;background:#4b5262"></div>
<div style="left:1253px;top:329px;width:10px;height:21px;background:#4b5262"></div>
<div class="ig" style="left:1234px;top:131px;height:88px"></div>
<div class="ig" style="left:1254px;top:153px;height:44px"></div>
<div class="ig" style="left:1234px;top:285px;height:66px"></div>
<div class="ln" style="left:1168px;top:110px">1</div>
<div class="cl" style="left:1234px;top:110px"><span class="p">&lt;</span><span class="t">template</span><span class="p">&gt;</span></div>
<div class="ln" style="left:1168px;top:132px">2</div>
<div class="cl" style="left:1234px;top:132px">  <span class="p">&lt;</span><span class="t">div</span><span class="p">&gt;</span></div>
<div class="ln" style="left:1168px;top:154px">3</div>
<div class="cl" style="left:1234px;top:154px">    <span class="p">&lt;</span><span class="t">h2</span><span class="p">&gt;</span><span class="cjk">我是关于</span><span class="p">&lt;/</span><span class="t">h2</span><span class="p">&gt;</span></div>
<div class="ln" style="left:1168px;top:176px">4</div>
<div class="cl" style="left:1234px;top:176px">    <span class="p">&lt;</span><span class="t">p</span><span class="p">&gt;</span><span class="cjk">我是关于内容，呵呵呵</span><span class="p">&lt;/</span><span class="t">p</span><span class="p">&gt;</span></div>
<div class="ln" style="left:1168px;top:198px">5</div>
<div class="cl" style="left:1234px;top:198px">  <span class="p">&lt;/</span><span class="t">div</span><span class="p">&gt;</span></div>
<div class="ln" style="left:1168px;top:220px">6</div>
<div class="cl" style="left:1234px;top:220px"><span class="p">&lt;/</span><span class="t">template</span><span class="p">&gt;</span></div>
<div class="ln" style="left:1168px;top:242px">7</div>
<div class="cl" style="left:1234px;top:242px"></div>
<div class="ln" style="left:1168px;top:264px">8</div>
<div class="cl" style="left:1234px;top:264px"><span class="p">&lt;</span><span class="t">script</span><span class="p">&gt;</span></div>
<div class="ln" style="left:1168px;top:286px">9</div>
<div class="cl" style="left:1234px;top:286px">  <span class="k">export</span> <span class="k">default</span> <span class="y">{</span></div>
<div class="ln" style="left:1168px;top:308px">10</div>
<div class="cl" style="left:1234px;top:308px">    <span class="t">name</span>: <span class="s">'About'</span>,</div>
<div class="ln" style="left:1168px;top:330px">11</div>
<div class="cl" style="left:1234px;top:330px">  <span class="y">}</span></div>
<div class="ln" style="left:1168px;top:352px">12</div>
<div class="cl" style="left:1234px;top:352px"><span class="p">&lt;/</span><span class="t">script</span><span class="p">&gt;</span></div>
<div class="ln" style="left:1168px;top:374px">13</div>
<div class="cl" style="left:1234px;top:374px"></div>
<div class="ln" style="left:1168px;top:396px">14</div>
<div class="cl" style="left:1234px;top:396px"><span class="p">&lt;</span><span class="t">style</span> <span class="a">scoped</span><span class="p">&gt;</span></div>
<div class="ln" style="left:1168px;top:418px">15</div>
<div class="cl" style="left:1234px;top:418px"></div>
<div class="ln" style="left:1168px;top:440px">16</div>
<div class="cl" style="left:1234px;top:440px"><span class="p">&lt;/</span><span class="t">style</span><span class="p">&gt;</span></div>
<svg style="left:1213px;top:325px" width="5" height="8" viewBox="0 0 5 8"><path d="M0 0 L5 4 L0 8 Z" fill="#a81b1f"/></svg>
<div style="left:1254px;top:306px;width:157px;height:1px;background:#c9a92a"></div>
<div style="left:1254px;top:306px;width:1px;height:23px;background:#c9a92a"></div>
<div style="left:1254px;top:329px;width:10px;height:1px;background:#c9a92a"></div>
<div class="cl" style="left:1468px;top:307px;color:#5a5f69">You, 16 days ago</div>
<div style="left:1155px;top:30px;width:1px;height:788px;background:#1b1e23"></div>
</body></html>
